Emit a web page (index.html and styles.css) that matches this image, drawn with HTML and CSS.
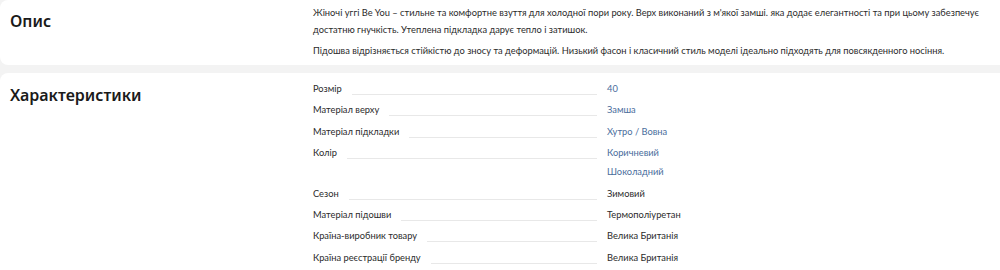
FILE: index.html
```html
<!DOCTYPE html>
<html lang="uk">
<head>
<meta charset="utf-8">
<title>Опис</title>
<link rel="stylesheet" href="styles.css">
</head>
<body>
<section class="card card-desc">
  <h2 class="title">Опис</h2>
  <div class="desc">
    <p>Жіночі уггі Be You – стильне та комфортне взуття для холодної пори року. Верх виконаний з м'якої замші. яка додає елегантності та при цьому забезпечує достатню гнучкість. Утеплена підкладка дарує тепло і затишок.</p>
    <p>Підошва відрізняється стійкістю до зносу та деформацій. Низький фасон і класичний стиль моделі ідеально підходять для повсякденного носіння.</p>
  </div>
</section>
<section class="card card-specs">
  <h2 class="title title-specs">Характеристики</h2>
  <dl class="specs">
    <div class="row"><dt><span>Розмір</span><i class="dots"></i></dt><dd><a class="link">40</a></dd></div>
    <div class="row"><dt><span>Матеріал верху</span><i class="dots"></i></dt><dd><a class="link">Замша</a></dd></div>
    <div class="row"><dt><span>Матеріал підкладки</span><i class="dots"></i></dt><dd><a class="link">Хутро / Вовна</a></dd></div>
    <div class="row"><dt><span>Колір</span><i class="dots"></i></dt><dd><a class="link">Коричневий</a><a class="link">Шоколадний</a></dd></div>
    <div class="row"><dt><span>Сезон</span><i class="dots"></i></dt><dd>Зимовий</dd></div>
    <div class="row"><dt><span>Матеріал підошви</span><i class="dots"></i></dt><dd>Термополіуретан</dd></div>
    <div class="row"><dt><span>Країна-виробник товару</span><i class="dots"></i></dt><dd>Велика Британія</dd></div>
    <div class="row"><dt><span>Країна реєстрації бренду</span><i class="dots"></i></dt><dd>Велика Британія</dd></div>
  </dl>
</section>
</body>
</html>
```
FILE: styles.css
```css
html, body {
  margin: 0;
  padding: 0;
}
body {
  background: #f3f3f3;
  font-family: Lato, "Open Sans", sans-serif;
  color: #2b2b2b;
  overflow: hidden;
}
.card {
  background: #fff;
  border-radius: 8px 0 0 8px;
  display: grid;
  grid-template-columns: 303px 1fr;
  padding-left: 10px;
}
.card-desc {
  padding-top: 4px;
  padding-bottom: 6px;
  margin-bottom: 8px;
}
.card-specs {
  padding-top: 6px;
  min-height: 220px;
}
.title {
  margin: 5px 0 0;
  font-family: "Noto Sans", sans-serif;
  font-size: 16px;
  line-height: 24px;
  font-weight: 600;
  color: #1a1a1a;
}
.title-specs {
  margin-top: 4px;
}
.desc {
  font-size: 9.3px;
  line-height: 17px;
  padding-right: 20px;
}
.desc p {
  margin: 0 0 4px;
}
.desc p:last-child {
  margin-bottom: 0;
}
.specs {
  margin: 0;
  font-size: 9.3px;
  line-height: 19px;
  display: flex;
  flex-direction: column;
  gap: 2.4px;
}
.row {
  display: grid;
  grid-template-columns: 294px 1fr;
  align-items: start;
}
.row dt {
  display: flex;
  align-items: baseline;
  padding-right: 10px;
  height: 19px;
}
.row dt span {
  white-space: nowrap;
}
.dots {
  flex: 1;
  margin-left: 10px;
  border-bottom: 1px solid #e8e8e8;
  height: 1px;
  align-self: flex-end;
  margin-bottom: 3px;
}
.row dd {
  margin: 0;
  display: flex;
  flex-direction: column;
}
.link {
  color: #4a6d9c;
  text-decoration: none;
}
```
